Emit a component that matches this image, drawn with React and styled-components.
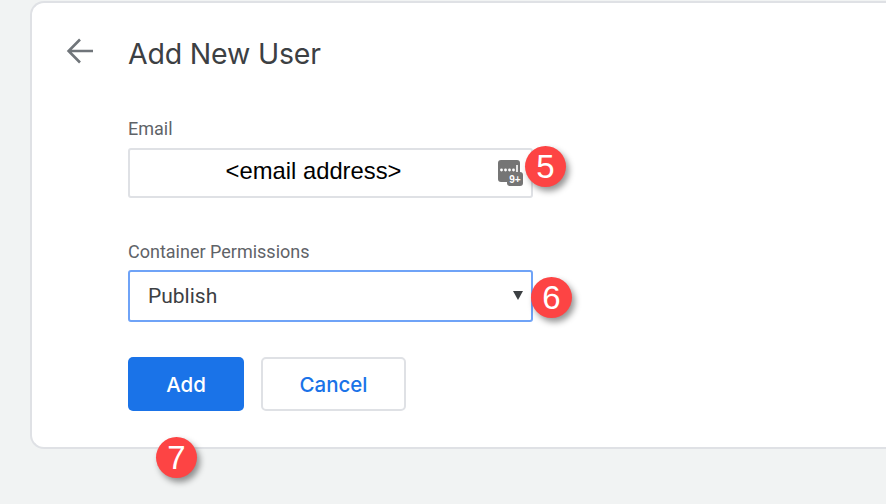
import React from 'react';
import styled, { createGlobalStyle } from 'styled-components';

const Global = createGlobalStyle`
  html, body { margin: 0; padding: 0; background: #f1f3f3; }
  body { width: 886px; height: 504px; overflow: hidden; font-family: Roboto, "Liberation Sans", sans-serif; }
`;
const Page = styled.div`
  width: 886px; height: 504px; box-sizing: border-box; padding: 1px 0 0 30px; overflow: hidden; position: relative;
`;
const Card = styled.div`
  box-sizing: border-box; width: 876px; height: 448px; background: #fff;
  border: 2px solid #dfe1e5; border-right: 0; border-radius: 14px 0 0 14px;
  padding: 30px 0 0 96px;
`;
const Header = styled.header`
  display: flex; align-items: center; height: 42px; margin-left: -63px; gap: 33px;
`;
const BackIcon = styled.svg`
  width: 30px; height: 30px; flex: none; display: block; margin-top: -6px;
`;
const Title = styled.h1`
  margin: 0; font: 400 28.5px/42px Inter, sans-serif; letter-spacing: -0.2px; color: #3c4043;
`;
const Form = styled.div`
  display: flex; flex-direction: column; width: 405px; margin-top: 44px; gap: 44px;
`;
const Field = styled.div`
  display: flex; flex-direction: column; gap: ${p => p.$gap}px;
`;
const Label = styled.label`
  font: 400 18px/20px Roboto, sans-serif; color: #5f6368;
`;
const EmailBox = styled.div`
  position: relative; box-sizing: border-box; height: 50px; border: 2px solid #dfe1e5; border-radius: 3px;
  display: flex; align-items: center; justify-content: center;
  padding: 0 58px 4px 24px;
  font: 400 23.8px/26px "Liberation Sans", Arial, sans-serif; color: #000;
`;
const SelectBox = styled.div`
  position: relative; box-sizing: border-box; height: 52px; border: 2px solid #6fa3f7; border-radius: 3px;
  display: flex; align-items: center; justify-content: space-between;
  padding: 0 8px 0 18px; font: 400 21px/24px Roboto, sans-serif; color: #3c4043;
`;
const Caret = styled.span`
  width: 0; height: 0; border-left: 5px solid transparent; border-right: 5px solid transparent;
  border-top: 9px solid #3c4043; margin-bottom: 2px;
`;
const PassIcon = styled.svg`
  position: absolute; right: 7px; top: 9px; width: 26px; height: 28px;
`;
const Badge = styled.div`
  position: absolute; width: 41px; height: 41px; border-radius: 50%; background: #fd4444; color: #fff;
  display: flex; align-items: center; justify-content: center;
  font: 400 33px/1 "Liberation Sans", Arial, sans-serif;
  box-shadow: 3px 4px 6px rgba(0,0,0,.42);
`;
const EmailBadge = styled(Badge)` right: -35px; top: -4px; `;
const SelectBadge = styled(Badge)` right: -41px; top: 5px; `;
const AddBadge = styled(Badge)` left: 156px; top: 437px; `;
const Actions = styled.div`
  display: flex; gap: 17px; margin-top: 35px;
`;
const Button = styled.button`
  box-sizing: border-box; height: 54px; border-radius: 5px; cursor: pointer; padding: 2px 0 0;
  font: 500 20.5px/24px Inter, sans-serif;
  width: ${p => (p.$primary ? '116px' : '145px')};
  background: ${p => (p.$primary ? '#1a73e8' : '#fff')};
  color: ${p => (p.$primary ? '#fff' : '#1a73e8')};
  border: ${p => (p.$primary ? '0' : '2px solid #dfe1e5')};
`;

export default function App() {
  return (
    <>
      <Global />
      <Page>
        <Card>
          <Header>
            <BackIcon viewBox="0 0 30 30" fill="none" stroke="#70757a" strokeWidth="2.6">
              <path d="M28 15H4M15 3.5 3.6 15 15 26.5" />
            </BackIcon>
            <Title>Add New User</Title>
          </Header>
          <Form>
            <Field $gap={9}>
              <Label>Email</Label>
              <EmailBox>
                &lt;email address&gt;
                <PassIcon viewBox="0 0 26 28">
                  <rect x="0" y="1" width="22" height="22" rx="3" fill="#757575" />
                  <g fill="#fff">
                    <circle cx="3.5" cy="11" r="1.4" /><circle cx="7.5" cy="11" r="1.4" />
                    <circle cx="11.5" cy="11" r="1.4" /><circle cx="15.5" cy="11" r="1.4" />
                    <rect x="18.2" y="6" width="1.6" height="7" />
                  </g>
                  <rect x="9" y="13" width="16" height="14" rx="3" fill="#757575" />
                  <text x="17" y="23.5" textAnchor="middle" fill="#fff" fontSize="10" fontWeight="700" fontFamily="Liberation Sans, sans-serif">9+</text>
                </PassIcon>
                <EmailBadge>5</EmailBadge>
              </EmailBox>
            </Field>
            <Field $gap={8}>
              <Label>Container Permissions</Label>
              <SelectBox>
                Publish
                <Caret />
                <SelectBadge>6</SelectBadge>
              </SelectBox>
            </Field>
          </Form>
          <Actions>
            <Button $primary>Add</Button>
            <Button>Cancel</Button>
          </Actions>
        </Card>
        <AddBadge>7</AddBadge>
      </Page>
    </>
  );
}
